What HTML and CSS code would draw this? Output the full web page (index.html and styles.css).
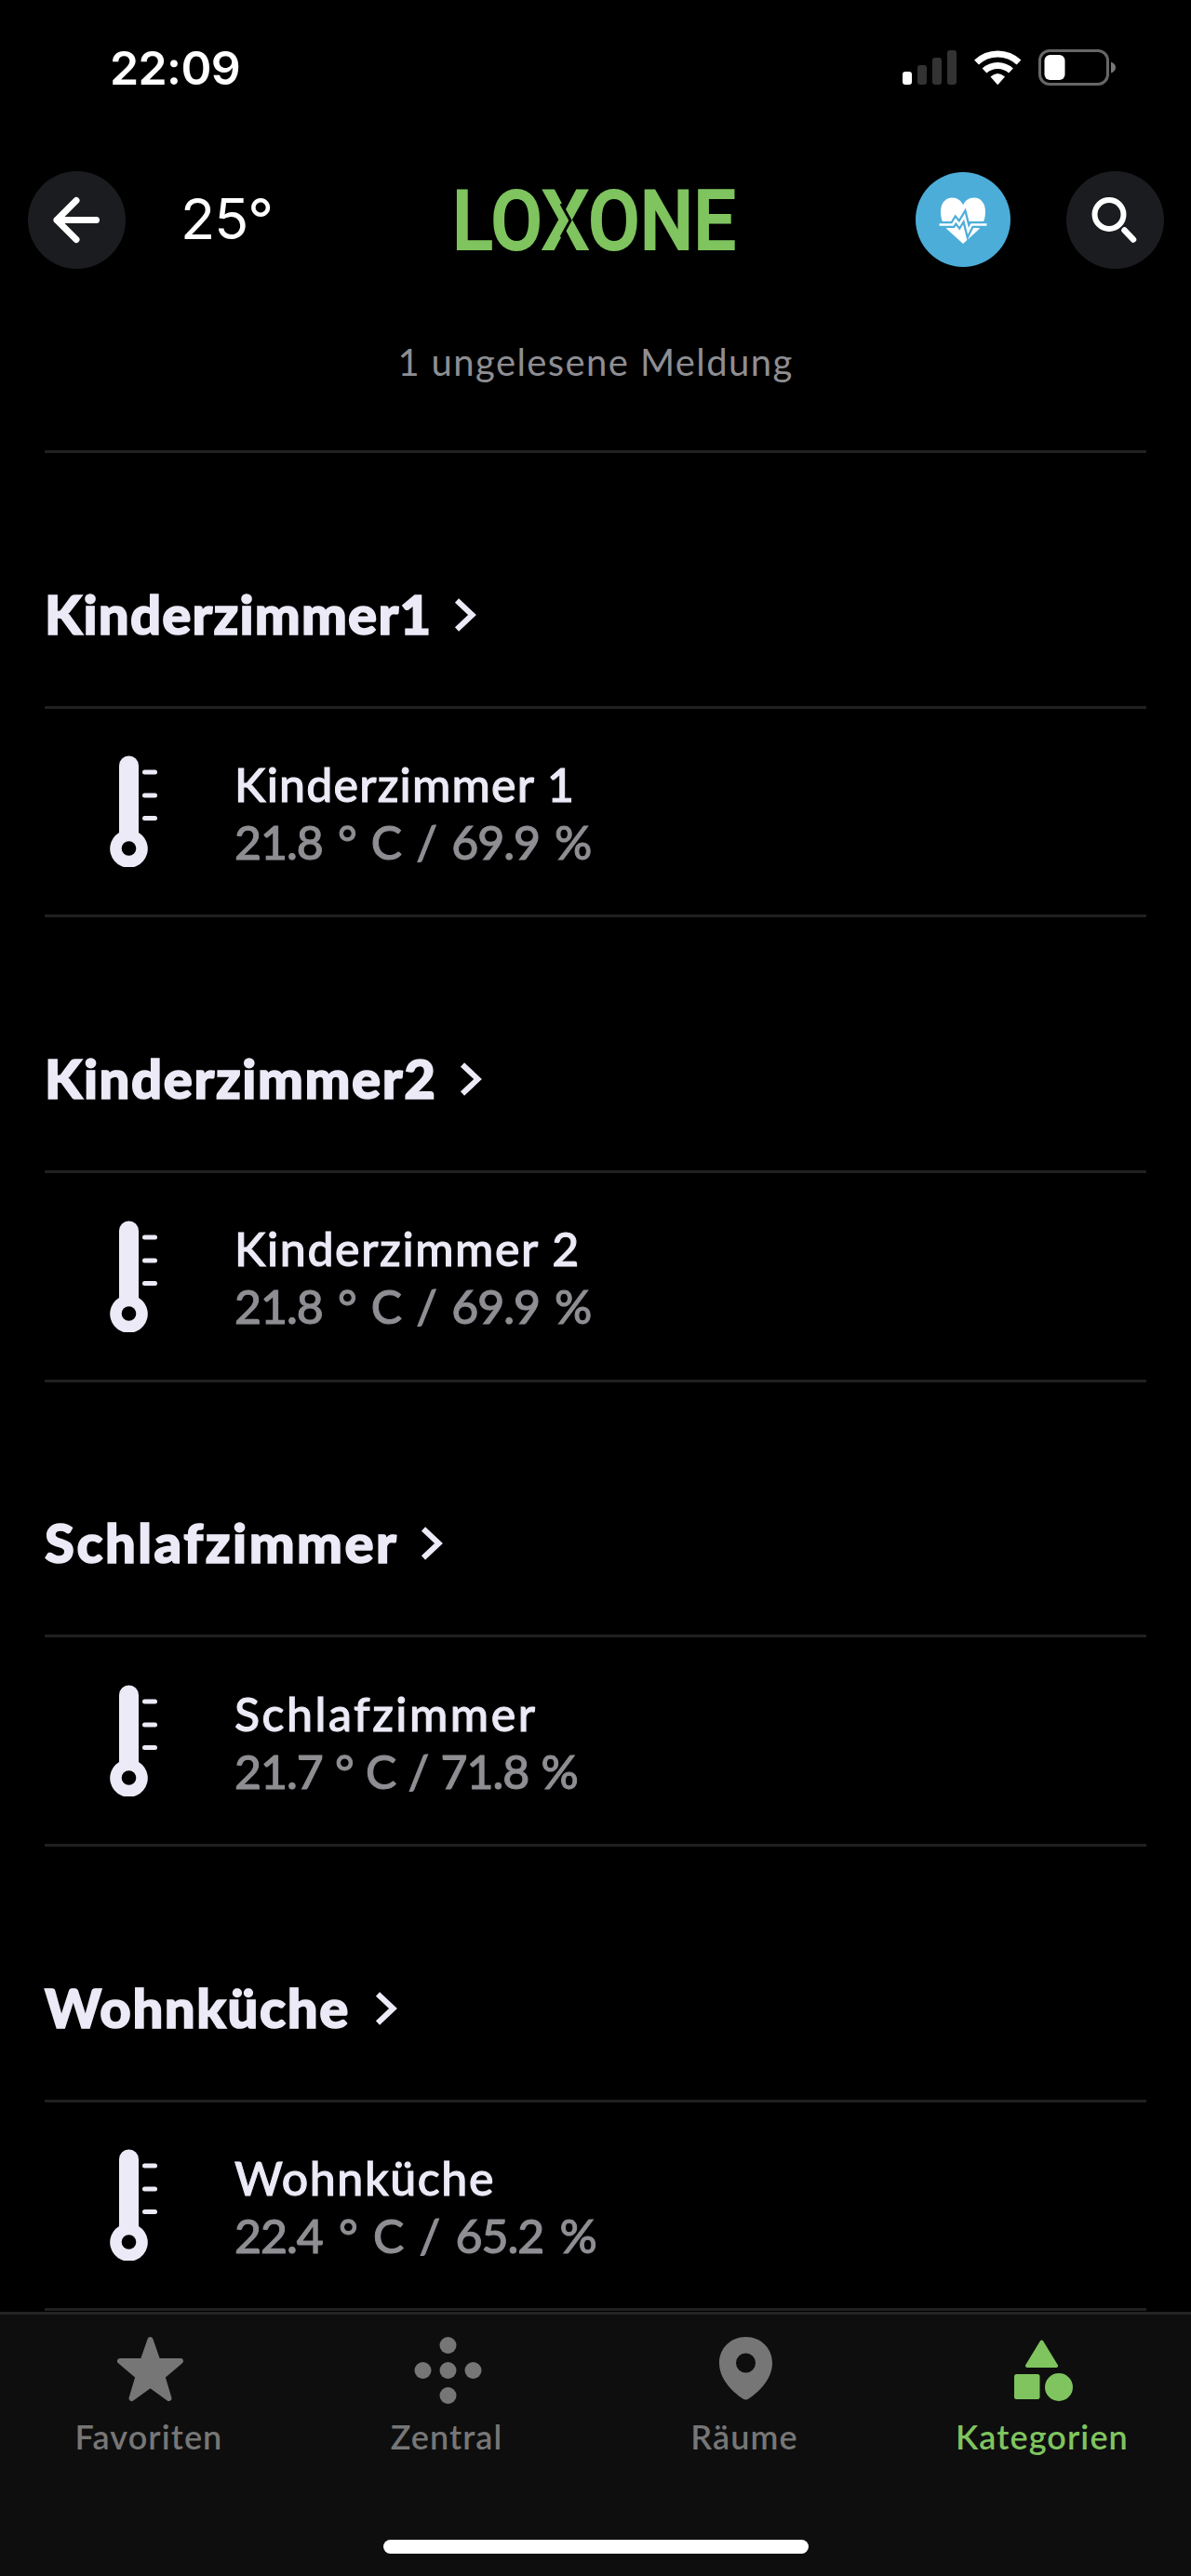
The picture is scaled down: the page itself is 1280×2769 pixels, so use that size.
FILE: index.html
```html
<!DOCTYPE html>
<html lang="de">
<head>
    <meta charset="UTF-8">
    <meta name="viewport" content="width=device-width, initial-scale=1.0">
    <title>Loxone</title>
    <link rel="stylesheet" href="styles.css">
</head>
<body>
    <svg class="defs" width="0" height="0">
        <symbol id="thermometer" viewBox="0 0 52 120">
            <path d="M10 11a10.5 10.5 0 0 1 21 0v72a20.3 20.3 0 1 1-21 0z"/>
            <circle cx="20.5" cy="100" r="7.8" fill="#000"/>
            <rect x="35" y="15.5" width="16" height="5" rx="2.5"/>
            <rect x="35" y="40.5" width="16" height="5" rx="2.5"/>
            <rect x="35" y="65" width="16" height="5" rx="2.5"/>
        </symbol>
        <symbol id="chevron" viewBox="0 0 26 38">
            <path d="M4 3.500L20.500 19 4 34.500" fill="none" stroke="currentColor" stroke-width="6"/>
        </symbol>
    </svg>

    <div class="statusbar">
        <span class="time">22:09</span>
        <svg class="status-icons" width="230" height="40" viewBox="0 0 230 40">
            <rect x="0" y="24" width="10" height="14" rx="3" fill="#fff"/>
            <rect x="16" y="17" width="10" height="21" rx="3" fill="#333"/>
            <rect x="32" y="9" width="10" height="29" rx="3" fill="#333"/>
            <rect x="48" y="1" width="10" height="37" rx="3" fill="#333"/>
            <g fill="none" stroke="#fff" stroke-width="7">
                <path d="M79.500 14a33 33 0 0 1 45.500 0"/>
                <path d="M88 23a21 21 0 0 1 28.500 0"/>
            </g>
            <path d="M94.500 29.500q7.750-7 15.500 0l-7 8q-.75.8-1.500 0z" fill="#fff"/>
            <rect x="147.500" y="1.500" width="73" height="36" rx="10.500" fill="none" stroke="#666" stroke-width="3"/>
            <rect x="152.500" y="6" width="22" height="27" rx="6" fill="#fff"/>
            <path d="M224 13.500q5 2 5 6t-5 6z" fill="#777"/>
        </svg>
    </div>

    <header class="header">
        <button class="round back">
            <svg width="105" height="105" viewBox="0 0 105 105" fill="none" stroke="#fff" stroke-width="7" stroke-linecap="round" stroke-linejoin="round">
                <path d="M73.500 52.500H31M52 31.500L31 52.500l21 21"/>
            </svg>
        </button>
        <span class="outside">25°</span>
        <svg class="logo" width="310" height="80" viewBox="0 0 310 80">
            <text x="1" y="71" textLength="305" lengthAdjust="spacingAndGlyphs">LOXONE</text>
            <path d="M118 22l10 18-10 18" fill="none" stroke="#000" stroke-width="3"/>
        </svg>
        <button class="round health">
            <svg width="102" height="102" viewBox="0 0 102 102">
                <path d="M51 77L34 61.500C29 56 27 49 27 42.500c0-9 5-15 12-15 6 0 10 3 12 8 2-5 6-8 12-8 7 0 12 6 12 15 0 6.500-2 13.500-7 19z" fill="#fff"/>
                <path d="M25 56.500h15l3-5 4 5 5.500-9 4 16 3.500-7h17" fill="none" stroke="#4dadd9" stroke-width="7"/>
                <path d="M25.500 56.500H40l3-5 4 5 5.500-9 4 16 3.500-7h16.500" fill="none" stroke="#fff" stroke-width="2.500"/>
            </svg>
        </button>
        <button class="round search">
            <svg width="105" height="105" viewBox="0 0 105 105" fill="none" stroke="#fff" stroke-width="6">
                <circle cx="46" cy="46.500" r="15.500"/>
                <path d="M62.500 63.500l9.500 10" stroke-width="6.500" stroke-linecap="round"/>
            </svg>
        </button>
    </header>

    <main class="content">
        <p class="notice">1 ungelesene Meldung</p>

        <section class="room kz1">
            <h2><span>Kinderzimmer1</span><svg class="chevron"><use href="#chevron"/></svg></h2>
            <div class="item">
                <svg class="icon"><use href="#thermometer"/></svg>
                <div class="info">
                    <div class="name">Kinderzimmer 1</div>
                    <div class="value">21.8 ° C / 69.9 %</div>
                </div>
            </div>
        </section>

        <section class="room kz2">
            <h2><span>Kinderzimmer2</span><svg class="chevron"><use href="#chevron"/></svg></h2>
            <div class="item">
                <svg class="icon"><use href="#thermometer"/></svg>
                <div class="info">
                    <div class="name">Kinderzimmer 2</div>
                    <div class="value">21.8 ° C / 69.9 %</div>
                </div>
            </div>
        </section>

        <section class="room sz">
            <h2><span>Schlafzimmer</span><svg class="chevron"><use href="#chevron"/></svg></h2>
            <div class="item">
                <svg class="icon"><use href="#thermometer"/></svg>
                <div class="info">
                    <div class="name">Schlafzimmer</div>
                    <div class="value">21.7 ° C / 71.8 %</div>
                </div>
            </div>
        </section>

        <section class="room wk">
            <h2><span>Wohnküche</span><svg class="chevron"><use href="#chevron"/></svg></h2>
            <div class="item">
                <svg class="icon"><use href="#thermometer"/></svg>
                <div class="info">
                    <div class="name">Wohnküche</div>
                    <div class="value">22.4 ° C / 65.2 %</div>
                </div>
            </div>
        </section>
    </main>

    <footer class="footer">
        <nav class="tabs">
            <a class="tab">
                <svg width="84" height="84" viewBox="0 0 84 84">
                    <path d="M43.500 10l8 23H76L56.500 49.500 63.500 73 43.500 58.500 23.500 73l7-23.500L11 33h24.500z" fill="currentColor" stroke="currentColor" stroke-width="6" stroke-linejoin="round"/>
                </svg>
                <span>Favoriten</span>
            </a>
            <a class="tab">
                <svg width="84" height="84" viewBox="0 0 84 84" fill="currentColor">
                    <circle cx="43.500" cy="16" r="9"/>
                    <circle cx="16.500" cy="43" r="9"/>
                    <circle cx="43.500" cy="43" r="9"/>
                    <circle cx="70.500" cy="43" r="9"/>
                    <circle cx="43.500" cy="70" r="9"/>
                </svg>
                <span>Zentral</span>
            </a>
            <a class="tab">
                <svg width="84" height="84" viewBox="0 0 84 84" fill="currentColor">
                    <path fill-rule="evenodd" d="M43.500 7C27 7 15 19.500 15 35c0 17 14 31 25.500 38.500q3 2 6 0C58 66 72 52 72 35 72 19.500 60 7 43.500 7zm0 17.500a10.500 10.500 0 1 1 0 21 10.500 10.500 0 0 1 0-21z"/>
                </svg>
                <span>Räume</span>
            </a>
            <a class="tab active">
                <svg width="84" height="84" viewBox="0 0 84 84" fill="currentColor">
                    <path d="M41.500 12.500L57 38H26z" stroke="currentColor" stroke-width="4" stroke-linejoin="round"/>
                    <rect x="12" y="47" width="27.500" height="27" rx="2.500"/>
                    <circle cx="60" cy="61" r="15"/>
                </svg>
                <span>Kategorien</span>
            </a>
        </nav>
        <div class="home"></div>
    </footer>
</body>
</html>
```
FILE: styles.css
```css
* {
    box-sizing: border-box;
}
body {
    display: flex;
    flex-direction: column;
    height: 2769px;
    margin: 0;
    background-color: #000;
    color: #eceaf6;
    font-family: Lato, sans-serif;
    overflow: hidden;
}
svg {
    display: block;
    flex: none;
}
.defs {
    position: absolute;
}
.statusbar {
    display: flex;
    justify-content: space-between;
    height: 184px;
    padding: 53px 80px 0 118px;
}
.time {
    height: 40px;
    line-height: 40px;
    color: #fff;
    font-family: Inter, sans-serif;
    font-size: 50px;
    font-weight: 600;
    letter-spacing: -0.6px;
}
.header {
    display: flex;
    align-items: center;
    height: 105px;
    padding: 0 29px 0 30px;
}
.round {
    flex: none;
    width: 105px;
    height: 105px;
    padding: 0;
    border: none;
    border-radius: 50%;
    background-color: #1b1c1f;
}
.outside {
    width: 350px;
    padding: 0 0 3px 59px;
    color: #fff;
    font-family: Inter, sans-serif;
    font-size: 61px;
    line-height: 70px;
    letter-spacing: -1px;
}
.logo {
    overflow: visible;
}
.logo text {
    fill: #7fc45f;
    stroke: #7fc45f;
    stroke-width: 2px;
    font-family: Roboto, sans-serif;
    font-size: 89px;
    font-weight: 500;
}
.health {
    width: 102px;
    height: 102px;
    margin-left: 189px;
    margin-bottom: 1px;
    background-color: #4dadd9;
}
.search {
    margin-left: 60px;
}
.content {
    padding: 0 48px;
}
.notice {
    height: 198px;
    margin: 0;
    padding-top: 75px;
    border-bottom: 3px solid #202020;
    color: #8e8e93;
    font-size: 40px;
    line-height: 50px;
    letter-spacing: 1.4px;
    text-align: center;
}
.room h2 {
    display: flex;
    align-items: center;
    height: 271.7px;
    margin: 0;
    padding-top: 76px;
    font-size: 58px;
    font-weight: 900;
    line-height: 70px;
    -webkit-text-stroke: 1.6px currentColor;
}
.room h2 span {
    padding-bottom: 2px;
}
.chevron {
    width: 26px;
    height: 38px;
    margin-left: 23px;
}
.item {
    display: flex;
    align-items: center;
    height: 227.6px;
    padding-left: 70px;
    border-top: 3px solid #202020;
    border-bottom: 3px solid #202020;
}
.icon {
    width: 52px;
    height: 120px;
    fill: currentColor;
}
.info {
    margin-left: 82px;
    padding-top: 3px;
    font-size: 50px;
    font-weight: 500;
    line-height: 62px;
    -webkit-text-stroke: 1px currentColor;
}
.value {
    color: #8e8e93;
    letter-spacing: -1px;
    word-spacing: 4.5px;
}
.kz1 h2,
.kz1 .name {
    letter-spacing: 1.2px;
}
.kz2 h2,
.kz2 .name {
    letter-spacing: 1.6px;
}
.sz h2,
.sz .name {
    letter-spacing: 2.5px;
}
.sz .value {
    word-spacing: 1.6px;
}
.wk h2,
.wk .name {
    letter-spacing: 1.6px;
}
.wk .chevron {
    margin-left: 26px;
}
.wk .value {
    word-spacing: 5.6px;
}
.footer {
    display: flex;
    flex: none;
    flex-direction: column;
    align-items: center;
    height: 284px;
    margin-top: auto;
    border-top: 3px solid #242424;
    background-color: #0e0e0e;
}
.tabs {
    display: grid;
    grid-template-columns: repeat(4, 320px);
    height: 242px;
    padding-top: 17px;
}
.tab {
    display: flex;
    flex-direction: column;
    align-items: center;
    color: #767676;
    font-size: 36px;
    font-weight: 600;
    line-height: 50px;
    letter-spacing: 1.1px;
}
.tab span {
    margin-top: 5px;
}
.tab.active {
    color: #7fc45f;
}
.home {
    width: 457px;
    height: 15px;
    border-radius: 8px;
    background-color: #fff;
}
```
